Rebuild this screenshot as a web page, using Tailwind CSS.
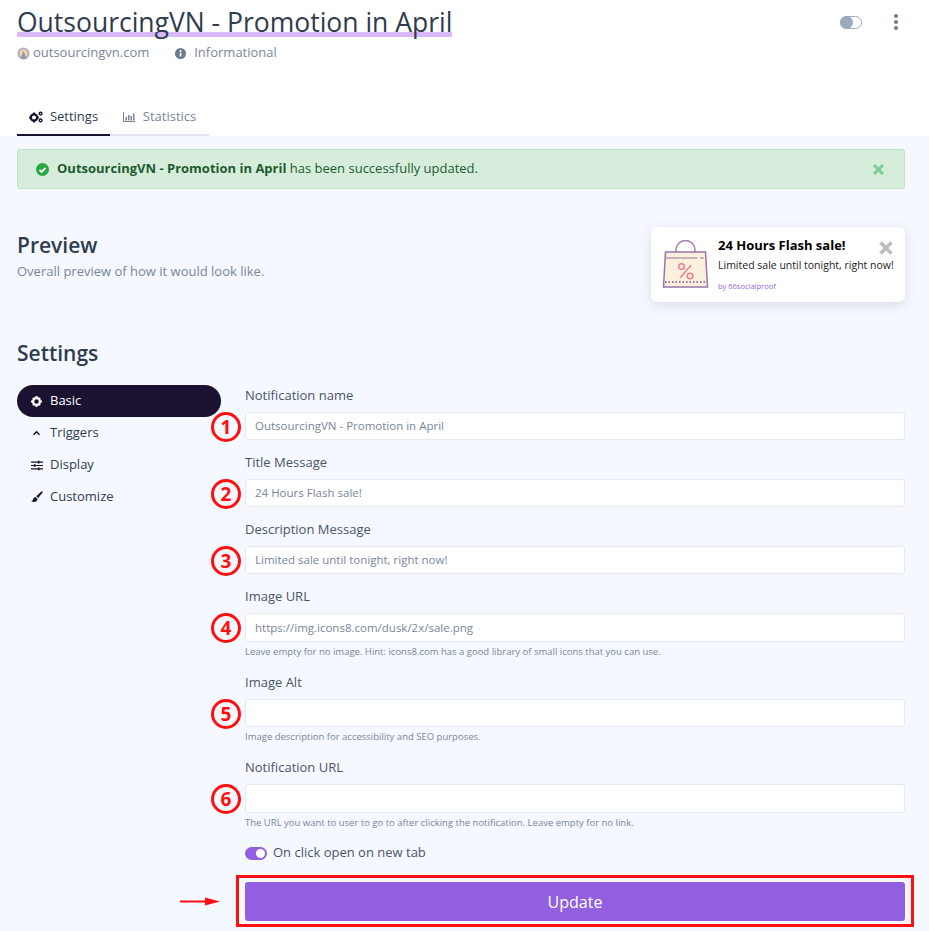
<!doctype html>
<html><head><meta charset="utf-8"><script src="https://cdn.jsdelivr.net/npm/@tailwindcss/browser@4"></script></head>
<body class="bg-[#f5f8ff] font-['Open_Sans',sans-serif] overflow-hidden">
<div class="w-[929px] h-[931px] overflow-hidden relative">
<header class="bg-white h-[136px] px-[17px] flex flex-col">
  <div class="flex justify-between pt-[4px]">
    <h1 class="text-[26.5px] leading-[36px] text-[#2f3c50] bg-[linear-gradient(transparent_78%,#d8b9fb_78%,#d8b9fb_92%,transparent_92%)]">OutsourcingVN - Promotion in April</h1>
    <div class="flex items-center gap-[32px] pr-[14px] pt-[0px] h-[36px]">
      <span class="w-[22px] h-[13px] rounded-full border border-[#9aa9be] bg-white relative"><span class="absolute left-[-1px] top-[-1px] w-[13px] h-[13px] rounded-full bg-[#9aa9be]"></span></span>
      <span class="flex flex-col gap-[2px] w-[4px]"><i class="block w-[4px] h-[4px] rounded-full bg-[#6c7a90]"></i><i class="block w-[4px] h-[4px] rounded-full bg-[#6c7a90]"></i><i class="block w-[4px] h-[4px] rounded-full bg-[#6c7a90]"></i></span>
    </div>
  </div>
  <div class="flex items-center mt-[3px] h-[20px] text-[13px] text-[#79869a]">
    <svg class="w-[13px] h-[13px] mr-[3px]" viewBox="0 0 13 13"><circle cx="6.5" cy="6.5" r="6" fill="#a8b0bc"/><circle cx="6.5" cy="6.2" r="4" fill="#f1cfa8"/><path d="M3.5 12 6.5 4l3 8z" fill="#8d97a5"/></svg>
    <span>outsourcingvn.com</span>
    <svg class="w-[11px] h-[11px] ml-[26px] mr-[8px]" viewBox="0 0 11 11"><circle cx="5.5" cy="5.5" r="5.5" fill="#6c7a90"/><rect x="4.7" y="4.7" width="1.7" height="3.8" fill="#fff"/><circle cx="5.5" cy="3" r="1" fill="#fff"/></svg>
    <span>Informational</span>
  </div>
  <nav class="flex mt-auto h-[37px] text-[13px]">
    <div class="w-[93px] flex items-center justify-center gap-[7px] border-b-[2px] border-[#1a1230] text-[#2f3c50]">
      <svg class="w-[14px] h-[12px]" viewBox="0 0 14 12" fill="#1a1230"><circle cx="5" cy="6.5" r="3.2" fill="none" stroke="#1a1230" stroke-width="2.2"/><path d="M4 1.5h2v2H4zM4 9.5h2v2H4zM.2 5.5h2v2H.2zM7.8 5.5h2v2H7.8z"/><circle cx="11.6" cy="2.6" r="1.4" fill="none" stroke="#1a1230" stroke-width="1.4"/><circle cx="11.6" cy="9.4" r="1.4" fill="none" stroke="#1a1230" stroke-width="1.4"/></svg>
      <span>Settings</span></div>
    <div class="w-[99px] flex items-center justify-center gap-[8px] border-b-[2px] border-[#e2e6ef] text-[#79869a]">
      <svg class="w-[12px] h-[10px]" viewBox="0 0 12 10" fill="#79869a"><path d="M0 0h1v9h11v1H0zM2.500 5h1.500v3.500H2.500zM5 3h1.500v5.500H5zM7.500 4h1.500v4.500H7.500zM10 1.500h1.500v7H10z"/></svg>
      <span>Statistics</span></div>
  </nav>
</header>
<main class="px-[24px] pl-[17px]">
  <div class="mt-[13px] h-[40px] bg-[#d7eddc] border border-[#bfe3c8] rounded-[3px] flex items-center pl-[18px] pr-[19px] text-[13px] text-[#1d5a30]">
    <svg class="w-[13px] h-[13px] mr-[8px]" viewBox="0 0 13 13"><circle cx="6.500" cy="6.500" r="6.500" fill="#28a745"/><path d="m3.500 6.800 2.100 2.100 3.900-4" fill="none" stroke="#fff" stroke-width="1.800"/></svg>
    <span><b class="font-bold">OutsourcingVN - Promotion in April</b> has been successfully updated.</span>
    <svg class="ml-auto w-[13px] h-[13px]" viewBox="0 0 13 13"><path d="m2 2 9 9M11 2l-9 9" stroke="#7fcb95" stroke-width="3"/></svg>
  </div>
  <section class="flex justify-between mt-[38px] h-[75px]">
    <div class="pt-[3px]">
      <h2 class="text-[21px] leading-[30px] font-semibold text-[#2f3c50]">Preview</h2>
      <p class="text-[13px] leading-[18px] mt-[2px] text-[#79869a]">Overall preview of how it would look like.</p>
    </div>
    <div class="w-[254px] h-[75px] bg-white rounded-[6px] shadow-[0_3px_12px_rgba(60,70,100,0.15)] flex relative">
      <svg class="absolute left-[11px] top-[13px] w-[47px] h-[49px]" viewBox="0 0 47 49"><path d="M14 14v-4a9 9 0 0 1 19 0v4" fill="none" stroke="#a77fb4" stroke-width="1.500"/><path d="M3.500 12h40l2 35H1.500z" fill="#fbf0dc" stroke="#9a73a8" stroke-width="1.500"/><path d="M3.500 18h32M38 18h4" stroke="#9a73a8" stroke-width="1.200"/><path d="M3 42h41" stroke="#9a73a8" stroke-width="2" stroke-dasharray="1.500 2"/><path d="M29 25 18 38" stroke="#ee7d95" stroke-width="1.500"/><circle cx="19.500" cy="26.500" r="2.800" fill="none" stroke="#ee7d95" stroke-width="1.500"/><circle cx="28" cy="36" r="2.800" fill="none" stroke="#ee7d95" stroke-width="1.500"/></svg>
      <div class="ml-[67px] font-['Liberation_Sans',sans-serif] pt-[0px]">
        <div class="text-[13px] leading-[18px] mt-[9px] font-['Open_Sans',sans-serif] font-bold text-black">24 Hours Flash sale!</div>
        <div class="text-[10.500px] leading-[14px] mt-[4px] font-['Open_Sans',sans-serif] text-[#1b1b1b] whitespace-nowrap">Limited sale until tonight, right now!</div>
        <div class="text-[7.500px] leading-[10px] mt-[9px] font-['Open_Sans',sans-serif] text-[#9568e0]">by 66socialproof</div>
      </div>
      <svg class="absolute left-[228px] top-[14px] w-[14px] h-[14px]" viewBox="0 0 14 14"><path d="m1.500 1.500 11 11M12.500 1.500l-11 11" stroke="#bdbdbd" stroke-width="3.500"/></svg>
    </div>
  </section>
  <h2 class="text-[21px] leading-[30px] font-semibold text-[#2f3c50] mt-[36px]">Settings</h2>
  <div class="flex mt-[17px]">
    <aside class="w-[204px] mr-[24px] shrink-0 text-[13px]">
      <div class="h-[32px] rounded-full bg-[#1a1230] text-white flex items-center pl-[14px]"><svg class="w-[11px] h-[11px] mr-[8px]" viewBox="0 0 11 11"><circle cx="5.500" cy="5.500" r="3.400" fill="none" stroke="#fff" stroke-width="2.200"/><path d="M4.500 0h2v2h-2zM4.500 9h2v2h-2zM0 4.500h2v2H0zM9 4.500h2v2H9zM1.200 2.600l1.400-1.400 1.400 1.400-1.400 1.400zM7 8.400l1.400-1.400 1.400 1.400-1.400 1.400zM7 2.600l1.400-1.400 1.400 1.400-1.400 1.400zM1.200 8.400l1.400-1.400 1.400 1.400-1.400 1.400z" fill="#fff"/></svg><span class="ml-[0px]">Basic</span></div>
      <div class="h-[32px] flex items-center pl-[14px] text-[#2f3c50]"><svg class="w-[11px] h-[11px] mr-[8px]" viewBox="0 0 11 11"><path d="m2.500 6.800 3-3 3 3" fill="none" stroke="#1a1230" stroke-width="1.600"/></svg><span>Triggers</span></div>
      <div class="h-[32px] flex items-center pl-[14px] text-[#2f3c50]"><svg class="w-[12px] h-[11px] mr-[7px]" viewBox="0 0 12 11" fill="#1a1230"><path d="M0 1.500h12v1.200H0zM0 4.900h12v1.200H0zM0 8.300h12v1.200H0z"/><path d="M6.800.8h1.700v2.600H6.800zM2.800 4.200h1.700v2.600H2.800zM6.800 7.600h1.700v2.600H6.800z"/></svg><span>Display</span></div>
      <div class="h-[32px] flex items-center pl-[14px] text-[#2f3c50]"><svg class="w-[12px] h-[12px] mr-[7px]" viewBox="0 0 12 12" fill="#1a1230"><path d="M11.500.5c.4.400 0 1-.5 1.700L7.200 7 5.300 5.200 9.800 1c.7-.6 1.300-.9 1.700-.5zM4.700 5.900 6.500 7.700C6.400 9.800 5 11 3 11 1.900 11 .9 10.700.3 10c1 0 1.500-.5 1.700-1.700.3-1.500 1.500-2.400 2.700-2.400z"/></svg><span>Customize</span></div>
    </aside>
    <form class="flex-1 text-[13px] text-[#4a5568]">
      <label class="block leading-[21px] h-[21px]">Notification name</label>
      <div class="relative mt-[6px] mb-[12px] h-[28px] bg-white border border-[#e5e9f2] rounded-[3px] flex items-center pl-[9px] text-[11.500px] text-[#79869a]">OutsourcingVN - Promotion in April
        <span class="absolute left-[-35px] top-[-1px] w-[30px] h-[30px] rounded-full border-[3px] border-[#ff0f0f] flex items-center justify-center text-[#ff0f0f] font-bold text-[19px] leading-none">1</span></div>
      <label class="block leading-[21px] h-[21px]">Title Message</label>
      <div class="relative mt-[6px] mb-[12px] h-[28px] bg-white border border-[#e5e9f2] rounded-[3px] flex items-center pl-[9px] text-[11.500px] text-[#79869a]">24 Hours Flash sale!
        <span class="absolute left-[-35px] top-[-1px] w-[30px] h-[30px] rounded-full border-[3px] border-[#ff0f0f] flex items-center justify-center text-[#ff0f0f] font-bold text-[19px] leading-none">2</span></div>
      <label class="block leading-[21px] h-[21px]">Description Message</label>
      <div class="relative mt-[6px] mb-[12px] h-[28px] bg-white border border-[#e5e9f2] rounded-[3px] flex items-center pl-[9px] text-[11.500px] text-[#79869a]">Limited sale until tonight, right now!
        <span class="absolute left-[-35px] top-[-1px] w-[30px] h-[30px] rounded-full border-[3px] border-[#ff0f0f] flex items-center justify-center text-[#ff0f0f] font-bold text-[19px] leading-none">3</span></div>
      <label class="block leading-[21px] h-[21px]">Image URL</label>
      <div class="relative mt-[6px] h-[29px] bg-white border border-[#e5e9f2] rounded-[3px] flex items-center pl-[9px] text-[11.500px] text-[#79869a]">https://img.icons8.com/dusk/2x/sale.png
        <span class="absolute left-[-35px] top-[-1px] w-[30px] h-[30px] rounded-full border-[3px] border-[#ff0f0f] flex items-center justify-center text-[#ff0f0f] font-bold text-[19px] leading-none">4</span></div>
      <p class="text-[9.500px] leading-[16px] mt-[2px] mb-[12px] text-[#79869a]">Leave empty for no image. Hint: icons8.com has a good library of small icons that you can use.</p>
      <label class="block leading-[21px] h-[21px]">Image Alt</label>
      <div class="relative mt-[6px] h-[28px] bg-white border border-[#e5e9f2] rounded-[3px]">
        <span class="absolute left-[-35px] top-[-1px] w-[30px] h-[30px] rounded-full border-[3px] border-[#ff0f0f] flex items-center justify-center text-[#ff0f0f] font-bold text-[19px] leading-none">5</span></div>
      <p class="text-[9.500px] leading-[16px] mt-[2px] mb-[12px] text-[#79869a]">Image description for accessibility and SEO purposes.</p>
      <label class="block leading-[21px] h-[21px]">Notification URL</label>
      <div class="relative mt-[6px] h-[29px] bg-white border border-[#e5e9f2] rounded-[3px]">
        <span class="absolute left-[-35px] top-[-1px] w-[30px] h-[30px] rounded-full border-[3px] border-[#ff0f0f] flex items-center justify-center text-[#ff0f0f] font-bold text-[19px] leading-none">6</span></div>
      <p class="text-[9.500px] leading-[16px] mt-[2px] text-[#79869a]">The URL you want to user to go to after clicking the notification. Leave empty for no link.</p>
      <div class="flex items-center h-[20px] mt-[12px] gap-[6px]">
        <span class="w-[22px] h-[13px] rounded-full bg-[#925fe0] relative"><span class="absolute right-[2px] top-[2px] w-[9px] h-[9px] rounded-full bg-white"></span></span>
        <span>On click open on new tab</span>
      </div>
      <div class="relative mt-[19px]">
        <button type="button" class="w-full h-[39px] rounded-[3px] bg-[#925fe0] text-white text-[16px]">Update</button>
        <div class="absolute left-[-9px] right-[-9px] top-[-7px] bottom-[-6px] border-[3px] border-[#ff0f0f] pointer-events-none"></div>
        <svg class="absolute left-[-65px] top-[14px] w-[41px] h-[11px]" viewBox="0 0 41 11"><path d="M0 5.500h28" stroke="#ff0f0f" stroke-width="2"/><path d="M25 1.500 40 5.500 25 9.500z" fill="#ff0f0f"/></svg>
      </div>
    </form>
  </div>
</main>
</div>
</body></html>
